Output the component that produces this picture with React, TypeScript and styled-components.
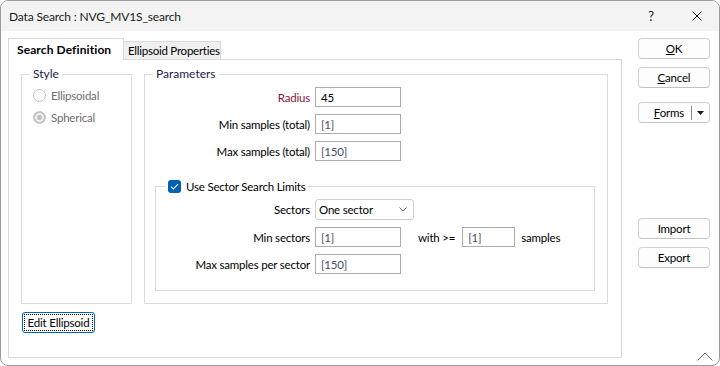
import React from "react";
import styled, { createGlobalStyle } from "styled-components";

const FONT = `"Segoe UI", Lato, "Noto Sans", sans-serif`;

const GlobalStyle = createGlobalStyle`
  html, body { margin: 0; padding: 0; background: #ffffff; }
  body { font-family: ${FONT}; font-size: 11.5px; letter-spacing: -0.2px; color: #000; }
  * { box-sizing: border-box; }
`;

const Window = styled.div`
  position: relative;
  width: 720px;
  height: 366px;
  border: 1px solid #9c9c9c;
  border-radius: 8px;
  overflow: hidden;
  background: #ffffff;
  display: flex;
  flex-direction: column;
`;

const TitleBar = styled.div`
  height: 30px;
  flex: none;
  background: #f3f3f3;
  display: flex;
  align-items: center;
  padding-left: 8px;
  font-size: 12px;
  letter-spacing: -0.15px;
  color: #1a1a1a;
`;

const TitleText = styled.div`
  flex: 1;
  white-space: nowrap;
`;

const CaptionButton = styled.div<{ $w: number }>`
  width: ${(p) => p.$w}px;
  height: 30px;
  display: flex;
  align-items: center;
  justify-content: center;
  font-size: 13px;
  color: #1a1a1a;
`;

const Body = styled.div`
  flex: 1;
  display: flex;
  padding: 7px 8px 7px 7px;
`;

const TabArea = styled.div`
  width: 614px;
  display: flex;
  flex-direction: column;
`;

const TabStrip = styled.div`
  height: 22px;
  display: flex;
  align-items: flex-end;
  position: relative;
  z-index: 1;
`;

const Tab = styled.div<{ $active?: boolean; $w: number }>`
  width: ${(p) => p.$w}px;
  height: ${(p) => (p.$active ? 22 : 19)}px;
  padding-left: ${(p) => (p.$active ? 8 : 4)}px;
  border: 1px solid #d9d9d9;
  border-bottom: ${(p) => (p.$active ? "none" : "1px solid #d9d9d9")};
  border-left: ${(p) => (p.$active ? "1px solid #d9d9d9" : "none")};
  background: ${(p) => (p.$active ? "#ffffff" : "#f0f0f0")};
  font-weight: ${(p) => (p.$active ? 700 : 400)};
  font-size: ${(p) => (p.$active ? "12px" : "11.5px")};
  letter-spacing: ${(p) => (p.$active ? "0.1px" : "-0.25px")};
  display: flex;
  align-items: center;
  white-space: nowrap;
  color: #000;
`;

const Panel = styled.div`
  flex: 1;
  margin-top: -1px;
  border: 1px solid #d9d9d9;
  padding: 14px 13px 0 12px;
  display: flex;
  flex-direction: column;
`;

const GroupsRow = styled.div`
  display: flex;
  gap: 12px;
`;

const Group = styled.div<{ $w: number; $h: number }>`
  position: relative;
  width: ${(p) => p.$w}px;
  height: ${(p) => p.$h}px;
  border: 1px solid #dcdcdc;
`;

const GroupLabel = styled.div`
  position: absolute;
  top: -9px;
  left: 8px;
  padding: 0 3px;
  background: #ffffff;
  color: #1c1c48;
  font-size: 12px;
  letter-spacing: 0;
  line-height: 16px;
  white-space: nowrap;
`;

const RadioList = styled.div`
  display: flex;
  flex-direction: column;
  gap: 2px;
  padding: 10px 0 0 11px;
`;

const RadioRow = styled.div`
  height: 20px;
  display: flex;
  align-items: center;
  gap: 5px;
  color: #6d6d6d;
`;

const RadioCircle = styled.div<{ $checked?: boolean }>`
  width: 13px;
  height: 13px;
  border-radius: 50%;
  border: 1px solid #c4c4c4;
  background: ${(p) =>
    p.$checked
      ? "radial-gradient(circle, #c2c2c2 0 2.4px, #f2f2f2 2.9px 4px, #c4c4c4 4.6px)"
      : "#ffffff"};
`;

const FormGrid = styled.div<{ $label: number; $top: number }>`
  display: grid;
  grid-template-columns: ${(p) => p.$label}px auto;
  column-gap: 5px;
  row-gap: 7px;
  padding-top: ${(p) => p.$top}px;
  align-items: center;
`;

const FieldLabel = styled.div<{ $accent?: boolean }>`
  text-align: right;
  white-space: nowrap;
  color: ${(p) => (p.$accent ? "#86153a" : "#000")};
`;

const FieldLine = styled.div`
  display: flex;
  align-items: center;
`;

const TextBox = styled.div<{ $w: number; $dim?: boolean }>`
  width: ${(p) => p.$w}px;
  height: 20px;
  border: 1px solid #ababab;
  padding-left: 5px;
  display: flex;
  align-items: center;
  color: ${(p) => (p.$dim ? "#4c4c66" : "#000")};
  background: #fff;
`;

const Combo = styled.div`
  width: 99px;
  height: 21px;
  border: 1px solid #d0d0d0;
  border-radius: 3px;
  padding: 0 6px 0 3px;
  display: flex;
  align-items: center;
  justify-content: space-between;
  background: #fff;
`;

const InlineText = styled.span<{ $ml: number; $mr?: number }>`
  margin-left: ${(p) => p.$ml}px;
  margin-right: ${(p) => p.$mr ?? 0}px;
  white-space: nowrap;
`;

const SectorGroup = styled.div`
  position: relative;
  margin: 25px 12px 0 10px;
  height: 105px;
  border: 1px solid #dcdcdc;
`;

const CheckLabel = styled.div`
  position: absolute;
  top: -8px;
  left: 10px;
  padding: 0 2px;
  background: #fff;
  display: flex;
  align-items: center;
  gap: 5px;
  height: 14px;
  white-space: nowrap;
`;

const CheckBox = styled.div`
  width: 13px;
  height: 13px;
  border-radius: 3px;
  background: #005fb8;
  display: flex;
  align-items: center;
  justify-content: center;
`;

const DialogButton = styled.div<{ $mt?: number; $w?: number }>`
  width: ${(p) => p.$w ?? 72}px;
  height: 21px;
  margin-top: ${(p) => p.$mt ?? 0}px;
  border: 1px solid #d2d2d2;
  border-bottom-color: #c2c2c2;
  border-radius: 4px;
  background: #fdfdfd;
  display: flex;
  align-items: center;
  justify-content: center;
  white-space: nowrap;
  color: #000;
`;

const ButtonColumn = styled.div`
  margin-left: 16px;
  width: 72px;
  display: flex;
  flex-direction: column;
`;

const SplitButton = styled(DialogButton)`
  justify-content: flex-end;
  padding-right: 5px;
`;

const SplitDivider = styled.div`
  width: 1px;
  height: 14px;
  background: #8a8a8a;
  margin: 0 5px 0 7px;
`;

const FocusButton = styled.div`
  margin: 8px 0 0 1px;
  width: 73px;
  height: 21px;
  border: 1px solid #0067c0;
  border-radius: 3px;
  padding: 1px;
  background: #fdfdfd;
`;

const FocusRing = styled.div`
  height: 100%;
  border: 1px dotted #000;
  display: flex;
  align-items: center;
  justify-content: center;
  white-space: nowrap;
`;

const CornerCaret = styled.div`
  position: absolute;
  right: 6px;
  bottom: 4px;
  width: 16px;
  height: 9px;
  display: flex;
`;

const U = styled.span`
  text-decoration: underline;
`;

export default function App() {
  return (
    <>
      <GlobalStyle />
      <Window>
        <TitleBar>
          <TitleText>Data Search : NVG_MV1S_search</TitleText>
          <CaptionButton $w={46}>?</CaptionButton>
          <CaptionButton $w={45}>
            <svg width="10" height="10" viewBox="0 0 10 10">
              <path d="M0.5 0.5 L9.5 9.5 M9.5 0.5 L0.5 9.5" stroke="#1a1a1a" strokeWidth="1" />
            </svg>
          </CaptionButton>
        </TitleBar>
        <Body>
          <TabArea>
            <TabStrip>
              <Tab $active $w={116}>Search Definition</Tab>
              <Tab $w={97}>Ellipsoid Properties</Tab>
            </TabStrip>
            <Panel>
              <GroupsRow>
                <Group $w={111} $h={230}>
                  <GroupLabel>Style</GroupLabel>
                  <RadioList>
                    <RadioRow>
                      <RadioCircle />
                      Ellipsoidal
                    </RadioRow>
                    <RadioRow>
                      <RadioCircle $checked />
                      Spherical
                    </RadioRow>
                  </RadioList>
                </Group>
                <Group $w={464} $h={230}>
                  <GroupLabel>Parameters</GroupLabel>
                  <FormGrid $label={165} $top={12}>
                    <FieldLabel $accent>Radius</FieldLabel>
                    <TextBox $w={86}>45</TextBox>
                    <FieldLabel>Min samples (total)</FieldLabel>
                    <TextBox $w={86} $dim>[1]</TextBox>
                    <FieldLabel>Max samples (total)</FieldLabel>
                    <TextBox $w={86} $dim>[150]</TextBox>
                  </FormGrid>
                  <SectorGroup>
                    <CheckLabel>
                      <CheckBox>
                        <svg width="9" height="7" viewBox="0 0 9 7">
                          <path d="M1 3.6 L3.4 6 L8 1.2" fill="none" stroke="#fff" strokeWidth="1.1" />
                        </svg>
                      </CheckBox>
                      Use Sector Search Limits
                    </CheckLabel>
                    <FormGrid $label={154} $top={12}>
                      <FieldLabel>Sectors</FieldLabel>
                      <FieldLine>
                        <Combo>
                          One sector
                          <svg width="8" height="5" viewBox="0 0 8 5">
                            <path d="M0.5 0.5 L4 4 L7.5 0.5" fill="none" stroke="#555" strokeWidth="0.9" />
                          </svg>
                        </Combo>
                      </FieldLine>
                      <FieldLabel>Min sectors</FieldLabel>
                      <FieldLine>
                        <TextBox $w={86} $dim>[1]</TextBox>
                        <InlineText $ml={17} $mr={7}>with &gt;=</InlineText>
                        <TextBox $w={53} $dim>[1]</TextBox>
                        <InlineText $ml={6}>samples</InlineText>
                      </FieldLine>
                      <FieldLabel>Max samples per sector</FieldLabel>
                      <FieldLine>
                        <TextBox $w={86} $dim>[150]</TextBox>
                      </FieldLine>
                    </FormGrid>
                  </SectorGroup>
                </Group>
              </GroupsRow>
              <FocusButton>
                <FocusRing>Edit Ellipsoid</FocusRing>
              </FocusButton>
            </Panel>
          </TabArea>
          <ButtonColumn>
            <DialogButton>
              <U>O</U>K
            </DialogButton>
            <DialogButton $mt={8}>
              <U>C</U>ancel
            </DialogButton>
            <SplitButton $mt={14}>
              <span>
                <U>F</U>orms
              </span>
              <SplitDivider />
              <svg width="7" height="4" viewBox="0 0 7 4">
                <path d="M0 0 L7 0 L3.5 4 Z" fill="#1a1a1a" />
              </svg>
            </SplitButton>
            <DialogButton $mt={95}>Import</DialogButton>
            <DialogButton $mt={8}>Export</DialogButton>
          </ButtonColumn>
        </Body>
        <CornerCaret>
          <svg width="16" height="9" viewBox="0 0 16 9">
            <path d="M0.5 8.5 L8 1 L15.5 8.5" fill="none" stroke="#6a6a6a" strokeWidth="1" />
          </svg>
        </CornerCaret>
      </Window>
    </>
  );
}
